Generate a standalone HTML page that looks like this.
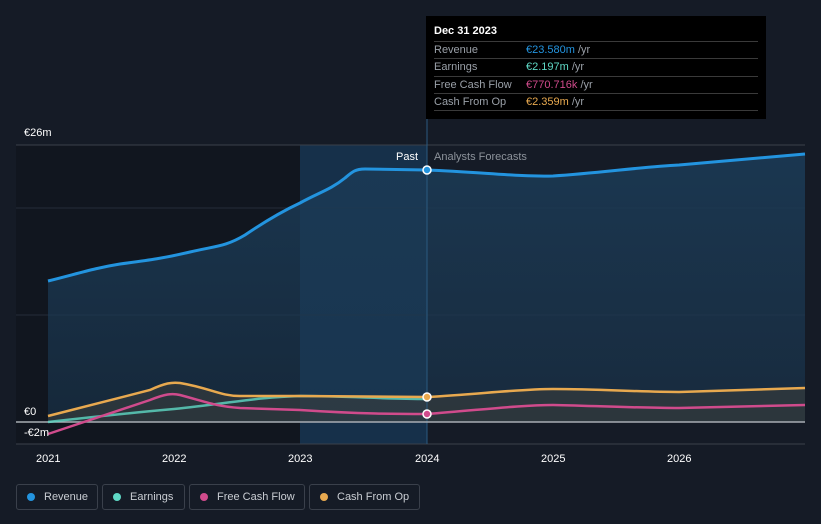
<!DOCTYPE html>
<html><head><style>
body{margin:0;width:821px;height:524px;background:#151b26;font-family:"Liberation Sans",sans-serif;overflow:hidden;position:relative}
.lg{position:absolute;top:484px;height:26px;border:1px solid #3a404b;border-radius:3px;color:#c9cdd3;font-size:11px;line-height:25px;box-sizing:border-box;padding-left:27px}
.lg i{position:absolute;left:10px;top:8px;width:8px;height:8px;border-radius:50%}
.tt{position:absolute;left:426px;top:16px;width:340px;height:103px;background:#000;color:#fff;font-size:11px}
.tt .r{position:absolute;left:8px;width:324px;border-top:1px solid #3a3a3a;height:16px;line-height:16px;color:#9aa0a8}
.tt .r b{font-weight:normal;position:absolute;left:92px}
</style></head><body>
<svg width="821" height="524" style="position:absolute;left:0;top:0">
<defs>
<linearGradient id="g" x1="0" y1="0" x2="0" y2="1"><stop offset="0" stop-color="#1b3a55" stop-opacity=".9"/><stop offset="1" stop-color="#1b3a55" stop-opacity=".5"/></linearGradient>
</defs>
<rect x="16" y="145" width="284" height="299" fill="#11161f"/>
<rect x="300" y="145" width="127" height="299" fill="#16304a"/>
<line x1="16" y1="145" x2="805" y2="145" stroke="#3a404b"/>
<line x1="16" y1="208" x2="805" y2="208" stroke="#252c38"/>
<line x1="16" y1="315" x2="805" y2="315" stroke="#252c38"/>
<line x1="16" y1="444" x2="805" y2="444" stroke="#3a404b"/>
<path d="M48,281 C80,273 95,268 120,264 C150,260 165,258 190,252 C215,246 225,247 245,235 C270,218 285,210 300,203 C320,192 330,190 345,178 C352,172 355,169 365,169 L427,170 C480,172 520,177 553,176 C600,173 640,167 679,165 L805,154 L805,422 L48,422Z" fill="url(#g)"/>
<path d="M48,416 L150,390 C165,383 172,382 180,383 C210,388 220,396 240,396 L300,396 L427,397 C480,394 520,389 553,389 C600,389 640,392 679,392 L805,388 L805,422 L48,422Z" fill="#3a3e3c" opacity=".6"/>
<path d="M48,281 C80,273 95,268 120,264 C150,260 165,258 190,252 C215,246 225,247 245,235 C270,218 285,210 300,203 C320,192 330,190 345,178 C352,172 355,169 365,169 L427,170 C480,172 520,177 553,176 C600,173 640,167 679,165 L805,154" fill="none" stroke="#2394df" stroke-width="3"/>
<line x1="427" y1="16" x2="427" y2="444" stroke="#2a5a80" stroke-width="1"/>
<line x1="16" y1="422" x2="805" y2="422" stroke="#a8adb4" stroke-width="1.5"/>
<path d="M48,422 C100,416 140,412 174,409 C230,403 260,397 300,396 C350,396 380,399 427,399" fill="none" stroke="#5fd9c6" stroke-width="2.5" opacity=".8"/>
<path d="M48,434 L150,400 C165,394 172,393 180,395 C210,403 215,406 240,408 L300,410 C360,414 400,414 427,414 C480,410 520,405 553,405 C600,406 640,408 679,408 L805,405" fill="none" stroke="#d04b8c" stroke-width="2.5"/>
<path d="M48,416 L150,390 C165,383 172,382 180,383 C210,388 220,396 240,396 L300,396 L427,397 C480,394 520,389 553,389 C600,389 640,392 679,392 L805,388" fill="none" stroke="#e8a94f" stroke-width="2.5"/>
<circle cx="427" cy="170" r="4" fill="#2394df" stroke="#fff" stroke-width="1.5"/>
<circle cx="427" cy="397" r="4" fill="#e8a94f" stroke="#fff" stroke-width="1.5"/>
<circle cx="427" cy="414" r="4" fill="#d04b8c" stroke="#fff" stroke-width="1.5"/>
<g font-size="11" fill="#fff" font-family="Liberation Sans">
<text x="24" y="136">€26m</text><text x="24" y="415">€0</text><text x="24" y="436">-€2m</text>
<text x="36" y="462">2021</text><text x="162" y="462">2022</text><text x="288" y="462">2023</text><text x="415" y="462">2024</text><text x="541" y="462">2025</text><text x="667" y="462">2026</text>
<text x="418" y="160" text-anchor="end">Past</text>
<text x="434" y="160" fill="#8d939b">Analysts Forecasts</text>
</g>
</svg>
<div class="tt">
<div style="position:absolute;left:8px;top:9px;font-weight:bold;font-size:11px">Dec 31 2023</div>
<div class="r" style="top:25px">Revenue<b style="color:#2394df">€23.580m <span style="color:#9aa0a8">/yr</span></b></div>
<div class="r" style="top:42px">Earnings<b style="color:#5fd9c6">€2.197m <span style="color:#9aa0a8">/yr</span></b></div>
<div class="r" style="top:60px">Free Cash Flow<b style="color:#d04b8c">€770.716k <span style="color:#9aa0a8">/yr</span></b></div>
<div class="r" style="top:77px">Cash From Op<b style="color:#e8a94f">€2.359m <span style="color:#9aa0a8">/yr</span></b></div>
<div class="r" style="top:94px;height:0"></div>
</div>
<div class="lg" style="left:16px;width:82px"><i style="background:#2394df"></i>Revenue</div>
<div class="lg" style="left:102px;width:83px"><i style="background:#5fd9c6"></i>Earnings</div>
<div class="lg" style="left:189px;width:116px"><i style="background:#d04b8c"></i>Free Cash Flow</div>
<div class="lg" style="left:309px;width:111px"><i style="background:#e8a94f"></i>Cash From Op</div>
</body></html>
